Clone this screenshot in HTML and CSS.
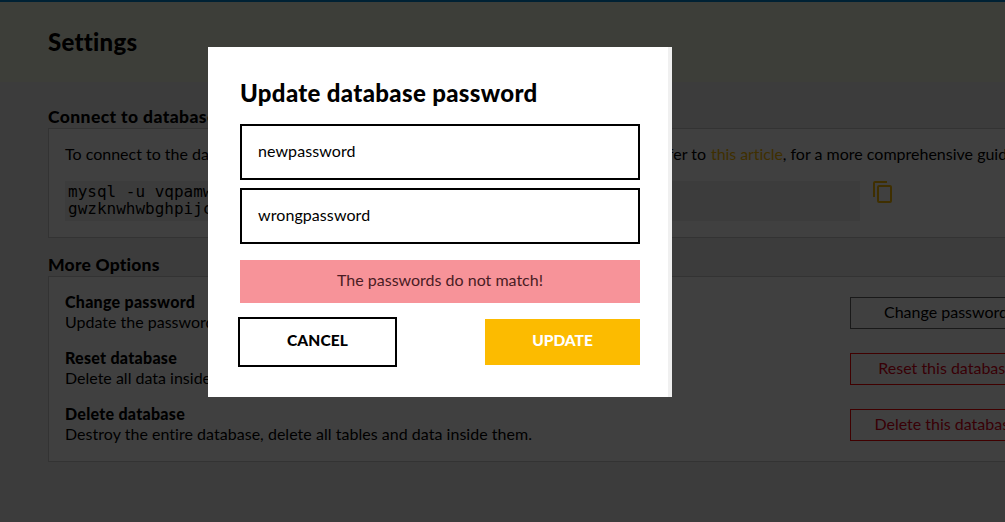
FILE: index.html
```html
<!DOCTYPE html>
<html lang="en">
<head>
<meta charset="utf-8">
<title>Settings</title>
<link rel="stylesheet" href="styles.css">
</head>
<body>
<div class="page">
  <header class="page-header"><h1>Settings</h1></header>
  <main class="content">
    <h2 class="t-connect">Connect to database</h2>
    <section class="panel connect">
      <p class="intro"><span class="lead"><span class="lead-start">To connect to the database, run this command.</span><span>Please refer to</span></span><a class="link">this article</a><span class="tail">, for a more comprehensive guide</span></p>
      <div class="command">
        <code>mysql -u vqpamwrtkq -p<br>gwzknwhwbghpijc</code>
        <svg class="copy" viewBox="0 0 24 24"><path d="M16 1H4a2 2 0 0 0-2 2v14h2V3h12V1zm3 4H8a2 2 0 0 0-2 2v14a2 2 0 0 0 2 2h11a2 2 0 0 0 2-2V7a2 2 0 0 0-2-2zm0 16H8V7h11v14z"/></svg>
      </div>
    </section>
    <h2 class="t-more">More Options</h2>
    <section class="panel options">
      <div class="option"><div><h3 class="t-change">Change password</h3><p>Update the password.</p></div><button class="action b-change">Change password</button></div>
      <div class="option"><div><h3 class="t-reset">Reset database</h3><p>Delete all data inside tables.</p></div><button class="action danger b-reset">Reset this database</button></div>
      <div class="option"><div><h3 class="t-delete">Delete database</h3><p class="d-delete">Destroy the entire database, delete all tables and data inside them.</p></div><button class="action danger b-delete">Delete this database</button></div>
    </section>
  </main>
</div>
<div class="overlay">
  <form class="modal">
    <h2 class="modal-title">Update database password</h2>
    <div class="field f-new">newpassword</div>
    <div class="field f-wrong">wrongpassword</div>
    <div class="error"><span>The passwords do not match!</span></div>
    <div class="buttons"><button type="button" class="cancel">CANCEL</button><button type="button" class="update">UPDATE</button></div>
  </form>
</div>
</body>
</html>
```
FILE: styles.css
```css
* { box-sizing: border-box; margin: 0; padding: 0; }
body { width: 1005px; height: 522px; overflow: hidden; font: 16px/20px Lato, "Open Sans", sans-serif; font-variant-ligatures: none; color: #000; background: #f0f0f0; }
.page { width: 1005px; height: 522px; overflow: hidden; border-top: 2px solid #0084d0; }
.page-header { height: 80px; padding: 26px 48px 0; background: #f4f6e2; }
h1 { font-size: 24px; line-height: 28px; font-weight: 900; letter-spacing: .25px; }
.content { width: 1076px; padding: 25px 48px 0; }
.content h2 { height: 21px; font-size: 17.5px; line-height: 20px; font-weight: 900; letter-spacing: .2px; }
.content .t-connect { letter-spacing: .4px; }
.panel { background: #fff; border: 1px solid #ccc; padding: 15px 16px 16px; }
.connect { height: 110px; margin-bottom: 17px; }
.intro { display: flex; white-space: nowrap; }
.lead { width: 646px; padding-right: 5px; flex: none; display: flex; justify-content: space-between; }
.link { color: #fcbb00; letter-spacing: -.08px; }
.command { margin-top: 17px; display: flex; gap: 11px; }
code { width: 795px; height: 40px; padding: 2px 3px; flex: none; background: #f0f0f0; font: 16px/17px "DejaVu Sans Mono", monospace; }
.copy { width: 24px; height: 24px; margin-top: -1px; fill: #fcbb00; }
.options { height: 186px; display: flex; flex-direction: column; gap: 16px; }
.option { height: 40px; display: flex; justify-content: space-between; align-items: flex-start; }
.d-delete { letter-spacing: .03px; }
h3 { font-size: 16px; line-height: 20px; font-weight: 900; letter-spacing: .27px; }
.action { width: 192px; height: 32px; margin: 5px -31px 0 0; padding-bottom: 2px; border: 1px solid #666; background: #fff; font: inherit; font-variant-ligatures: none; color: #000; }
.danger { border-color: red; color: #e00018; }
.overlay { position: fixed; inset: 0; background: rgba(0, 0, 0, .75); }
.modal { width: 464px; height: 350px; margin: 47px 0 0 208px; padding: 32px 28px 0 32px; background: #fff; border-right: 4px solid #f0f0f0; }
.modal-title { font-size: 24px; line-height: 28px; font-weight: 900; letter-spacing: .33px; margin-bottom: 17px; }
.field { height: 56px; margin-bottom: 8px; border: 2px solid #000; padding: 15px 16px; letter-spacing: .08px; }
.error { height: 43px; margin: 16px 0 14px; padding-top: 10px; text-align: center; background: #f79399; color: #4a1c24; }
.buttons { display: flex; justify-content: space-between; align-items: center; margin-left: -2px; }
.cancel, .update { font: 900 15.5px/20px Lato, sans-serif; }
.cancel { width: 159px; height: 50px; border: 2px solid #000; background: #fff; color: #000; padding-bottom: 4px; letter-spacing: .15px; }
.update { width: 155px; height: 46px; border: 0; background: #fcbb00; color: #fff; padding-bottom: 4px; }
```
